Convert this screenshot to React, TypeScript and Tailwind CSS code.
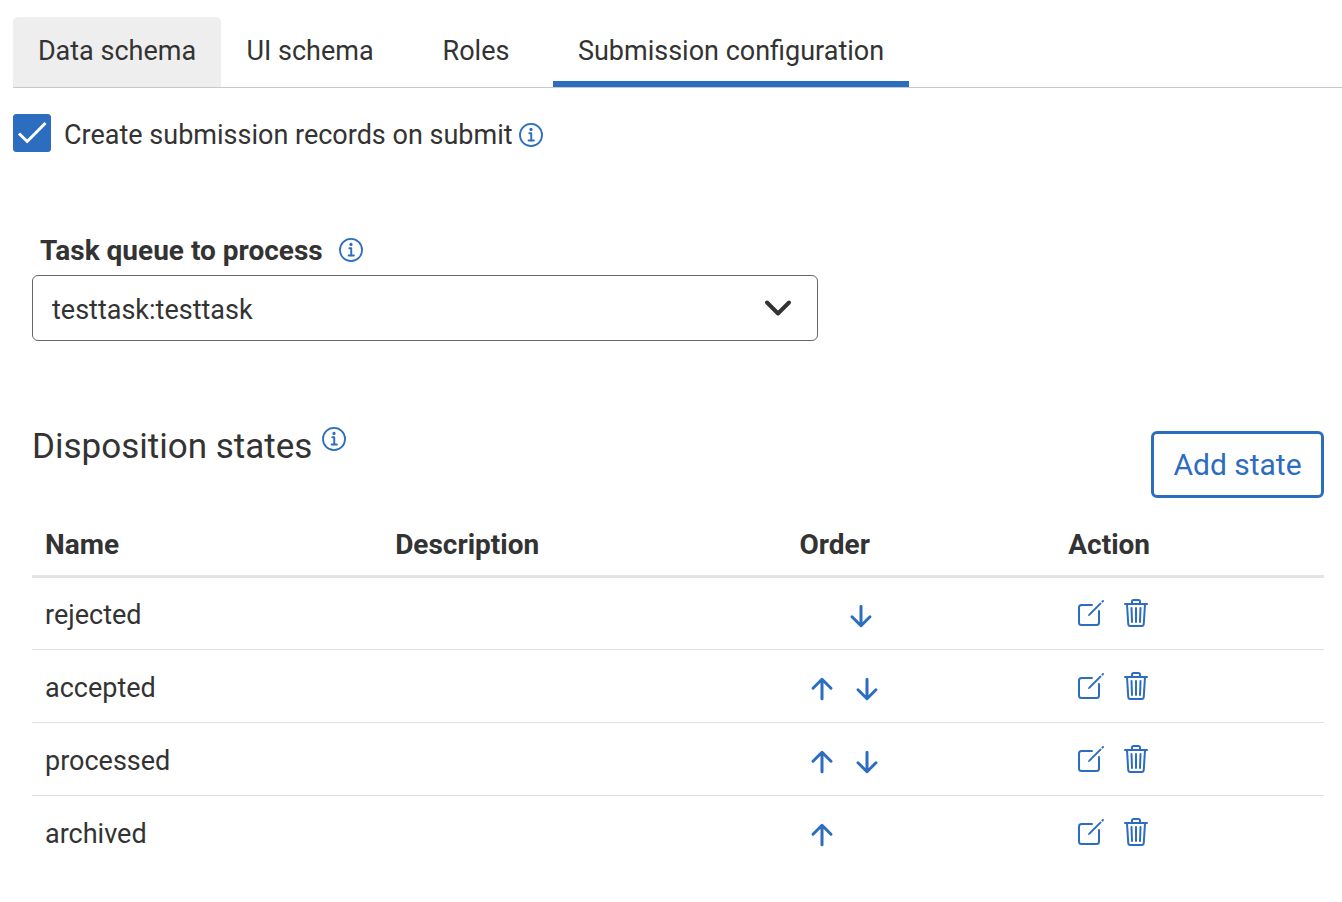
import { useState } from "react";
import type { ReactNode } from "react";

function Icon({ children, width = 32 }: { children: ReactNode; width?: number }) {
  return (
    <svg
      viewBox="0 0 512 512"
      className="size-8 shrink-0"
      fill="none"
      stroke="currentColor"
      strokeWidth={width}
      strokeLinecap="round"
      strokeLinejoin="round"
      aria-hidden="true"
    >
      {children}
    </svg>
  );
}

function InfoIcon() {
  return (
    <svg viewBox="48 48 400 400" className="size-6 shrink-0 text-[#2d6dc0]" fill="none" stroke="currentColor" aria-hidden="true">
      <circle cx="248" cy="248" r="184" strokeWidth="30" />
      <path d="M220 220h32v116" strokeWidth="32" strokeLinecap="round" strokeLinejoin="round" />
      <path d="M208 340h88" strokeWidth="32" strokeLinecap="round" />
      <circle cx="248" cy="156" r="27" fill="currentColor" stroke="none" />
    </svg>
  );
}

function ArrowUp() {
  return (
    <Icon width={48}>
      <path d="M112 244l144-144 144 144M256 120v292" />
    </Icon>
  );
}

function ArrowDown() {
  return (
    <Icon width={48}>
      <path d="M112 268l144 144 144-144M256 392V100" />
    </Icon>
  );
}

function EditIcon() {
  return (
    <Icon>
      <path d="M384 224v184a40 40 0 01-40 40H104a40 40 0 01-40-40V168a40 40 0 0140-40h167.48" />
      <path
        fill="currentColor"
        stroke="none"
        d="M459.94 53.25a16.06 16.06 0 00-23.22-.56L424.35 65a8 8 0 000 11.31l11.34 11.32a8 8 0 0011.34 0l12.06-12c6.1-6.09 6.67-16.01.85-22.38zM399.34 90L218.82 270.2a9 9 0 00-2.31 3.93L208.16 299a3.91 3.91 0 004.86 4.86l24.85-8.35a9 9 0 003.93-2.31L422 112.66a9 9 0 000-12.66l-9.95-10a9 9 0 00-12.71 0z"
      />
    </Icon>
  );
}

function TrashIcon() {
  return (
    <Icon>
      <path d="M112 112l20 320c.95 18.49 14.4 32 32 32h184c17.67 0 30.87-13.51 32-32l20-320" />
      <path d="M80 112h352" strokeMiterlimit="10" />
      <path d="M192 112V72a23.93 23.93 0 0124-24h80a23.93 23.93 0 0124 24v40M256 176v224M184 176l8 224M328 176l-8 224" />
    </Icon>
  );
}

const tabs = [
  { name: "Data schema", width: "min-w-[208px]" },
  { name: "UI schema", width: "min-w-[178px]" },
  { name: "Roles", width: "min-w-[154px]" },
  { name: "Submission configuration", width: "min-w-[356px]" },
];

const states = ["rejected", "accepted", "processed", "archived"];

export default function App() {
  const [active, setActive] = useState("Submission configuration");
  const [create, setCreate] = useState(true);

  return (
    <main className="pt-[17px] pl-[13px] font-['Roboto',sans-serif] text-[27px] leading-9 text-[#333333]">
      <div role="tablist" className="flex border-b border-[#c8c8c8]">
        {tabs.map((tab) => (
          <button
            key={tab.name}
            type="button"
            role="tab"
            aria-selected={tab.name === active}
            onClick={() => setActive(tab.name)}
            className={`h-[70px] border-b-6 pt-1 whitespace-nowrap ${tab.width} ${
              tab.name === active ? "border-[#2d6dc0]" : "border-transparent"
            } ${tab.name === "Data schema" ? "rounded-t-[5px] bg-[#eeeeee]" : ""}`}
          >
            {tab.name}
          </button>
        ))}
      </div>

      <div className="mt-[25px] flex items-center gap-1.5">
        <label className="flex items-center gap-[13px]">
          <span className="grid size-[38px]">
            <input
              type="checkbox"
              checked={create}
              onChange={(e) => setCreate(e.target.checked)}
              className="peer col-start-1 row-start-1 size-full appearance-none rounded-[3px] border border-[#666666] checked:border-[#2d6dc0] checked:bg-[#2d6dc0]"
            />
            <svg
              viewBox="0 0 38 38"
              className="pointer-events-none invisible col-start-1 row-start-1 size-full peer-checked:visible"
              fill="none"
              stroke="#ffffff"
              strokeWidth="3"
              aria-hidden="true"
            >
              <path d="M6 19.5 L14.2 27.5 L32.5 9" />
            </svg>
          </span>
          <span className="pt-1">Create submission records on submit</span>
        </label>
        <span className="pt-1">
          <InfoIcon />
        </span>
      </div>

      <section className="mt-[78px] mr-[18px] ml-[19px]">
        <div className="flex items-center gap-4 pl-2">
          <label htmlFor="queue" className="pt-0.5 text-[28px] font-bold">
            Task queue to process
          </label>
          <InfoIcon />
        </div>
        <div className="mt-1.5 grid max-w-[786px]">
          <select
            id="queue"
            className="col-start-1 row-start-1 h-[66px] w-full appearance-none rounded-md border border-[#666666] bg-white pt-1 pr-16 pl-[19px]"
          >
            <option>testtask:testtask</option>
          </select>
          <svg
            viewBox="0 0 40 40"
            className="pointer-events-none col-start-1 row-start-1 mr-5 size-10 self-center justify-self-end"
            fill="none"
            stroke="currentColor"
            strokeWidth="4"
            strokeLinecap="round"
            strokeLinejoin="round"
            aria-hidden="true"
          >
            <path d="M9 14.5 L20 25.5 L31 14.5" />
          </svg>
        </div>

        <div className="mt-20 flex items-start justify-between">
          <div className="flex gap-2.5">
            <h2 className="pt-0.5 text-[35px] leading-12">Disposition states</h2>
            <div className="pt-1.5">
              <InfoIcon />
            </div>
          </div>
          <button
            type="button"
            className="mt-[10px] h-[67px] min-w-[173px] rounded-md border-3 border-[#2d6dc0] text-[30px] text-[#2d6dc0]"
          >
            Add state
          </button>
        </div>

        <table className="mt-[13px] w-full table-fixed border-collapse text-left">
          <thead>
            <tr className="h-[65px] border-b-3 border-[#e3e4e8] text-[28px]">
              <th className="w-[27.1%] px-[13px] pt-1">Name</th>
              <th className="w-[31.3%] px-[13px] pt-1">Description</th>
              <th className="w-[20.8%] px-[13px] pt-1">Order</th>
              <th className="w-[20.8%] px-[13px] pt-1">Action</th>
            </tr>
          </thead>
          <tbody>
            {states.map((state, i) => (
              <tr key={state} className="h-[73px] border-b border-[#e0e0e0] last:border-b-0">
                <td className="px-[13px] pt-1">{state}</td>
                <td></td>
                <td className="px-[13px] pt-1.5">
                  <div className={`flex gap-[13px] ${i === 0 ? "pl-[45px]" : "pl-1.5"}`}>
                    {i > 0 && (
                      <button type="button" aria-label={`Move ${state} up`} className="text-[#2d6dc0]">
                        <ArrowUp />
                      </button>
                    )}
                    {i < states.length - 1 && (
                      <button type="button" aria-label={`Move ${state} down`} className="text-[#2d6dc0]">
                        <ArrowDown />
                      </button>
                    )}
                  </div>
                </td>
                <td className="px-[13px]">
                  <div className="flex gap-[13px] pl-[7px] text-[#2d6dc0]">
                    <button type="button" aria-label={`Edit ${state}`}>
                      <EditIcon />
                    </button>
                    <button type="button" aria-label={`Delete ${state}`}>
                      <TrashIcon />
                    </button>
                  </div>
                </td>
              </tr>
            ))}
          </tbody>
        </table>
      </section>
    </main>
  );
}
